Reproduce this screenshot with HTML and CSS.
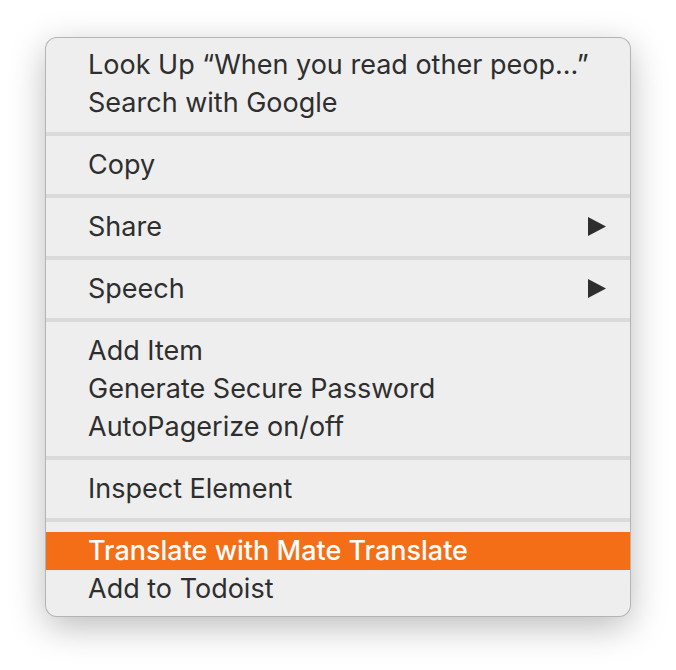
FILE: index.html
```html
<!DOCTYPE html>
<html lang="en">
<head>
<meta charset="utf-8">
<title>Context menu</title>
<link rel="stylesheet" href="styles.css">
</head>
<body>
<div class="menu" role="menu">
  <div class="group" role="group">
    <button class="item" role="menuitem">Look Up “When you read other peop...”</button>
    <button class="item" role="menuitem">Search with Google</button>
  </div>
  <div class="group" role="group">
    <button class="item" role="menuitem">Copy</button>
  </div>
  <div class="group" role="group">
    <button class="item" role="menuitem" aria-haspopup="menu">Share
      <svg class="arrow" viewBox="0 0 18 20" aria-hidden="true"><path d="M0 0L18 9.5L0 19Z"/></svg>
    </button>
  </div>
  <div class="group" role="group">
    <button class="item" role="menuitem" aria-haspopup="menu">Speech
      <svg class="arrow" viewBox="0 0 18 20" aria-hidden="true"><path d="M0 0L18 9.5L0 19Z"/></svg>
    </button>
  </div>
  <div class="group" role="group">
    <button class="item" role="menuitem">Add Item</button>
    <button class="item" role="menuitem">Generate Secure Password</button>
    <button class="item" role="menuitem">AutoPagerize on/off</button>
  </div>
  <div class="group" role="group">
    <button class="item" role="menuitem">Inspect Element</button>
  </div>
  <div class="group" role="group">
    <button class="item item-active" role="menuitem">Translate with Mate Translate</button>
    <button class="item" role="menuitem">Add to Todoist</button>
  </div>
</div>
</body>
</html>
```
FILE: styles.css
```css
* {
  box-sizing: border-box;
}

body {
  margin: 0;
  padding: 38px 46px 54px;
  background: #fff;
  font-family: Inter, "Liberation Sans", sans-serif;
}

.menu {
  overflow: hidden;
  border-radius: 11px;
  background: #eee;
  box-shadow: 0 0 0 1px #b4b4b4, 0 10px 36px rgba(0, 0, 0, 0.28);
}

.group {
  padding: 10px 0;
}

.group:first-child {
  padding-top: 8px;
}

.group:last-child {
  padding-bottom: 8px;
}

.group + .group {
  border-top: 4px solid #dadada;
}

.item {
  display: flex;
  align-items: center;
  justify-content: space-between;
  width: 100%;
  height: 38px;
  padding: 0 24px 0 42px;
  border: 0;
  background: transparent;
  color: #2e2e2e;
  font: inherit;
  font-size: 27px;
  line-height: 38px;
  text-align: left;
  white-space: nowrap;
}

.item-active {
  background: #f46e17;
  color: #fff;
  font-weight: 500;
}

.arrow {
  width: 18px;
  height: 20px;
  fill: currentColor;
}
```
